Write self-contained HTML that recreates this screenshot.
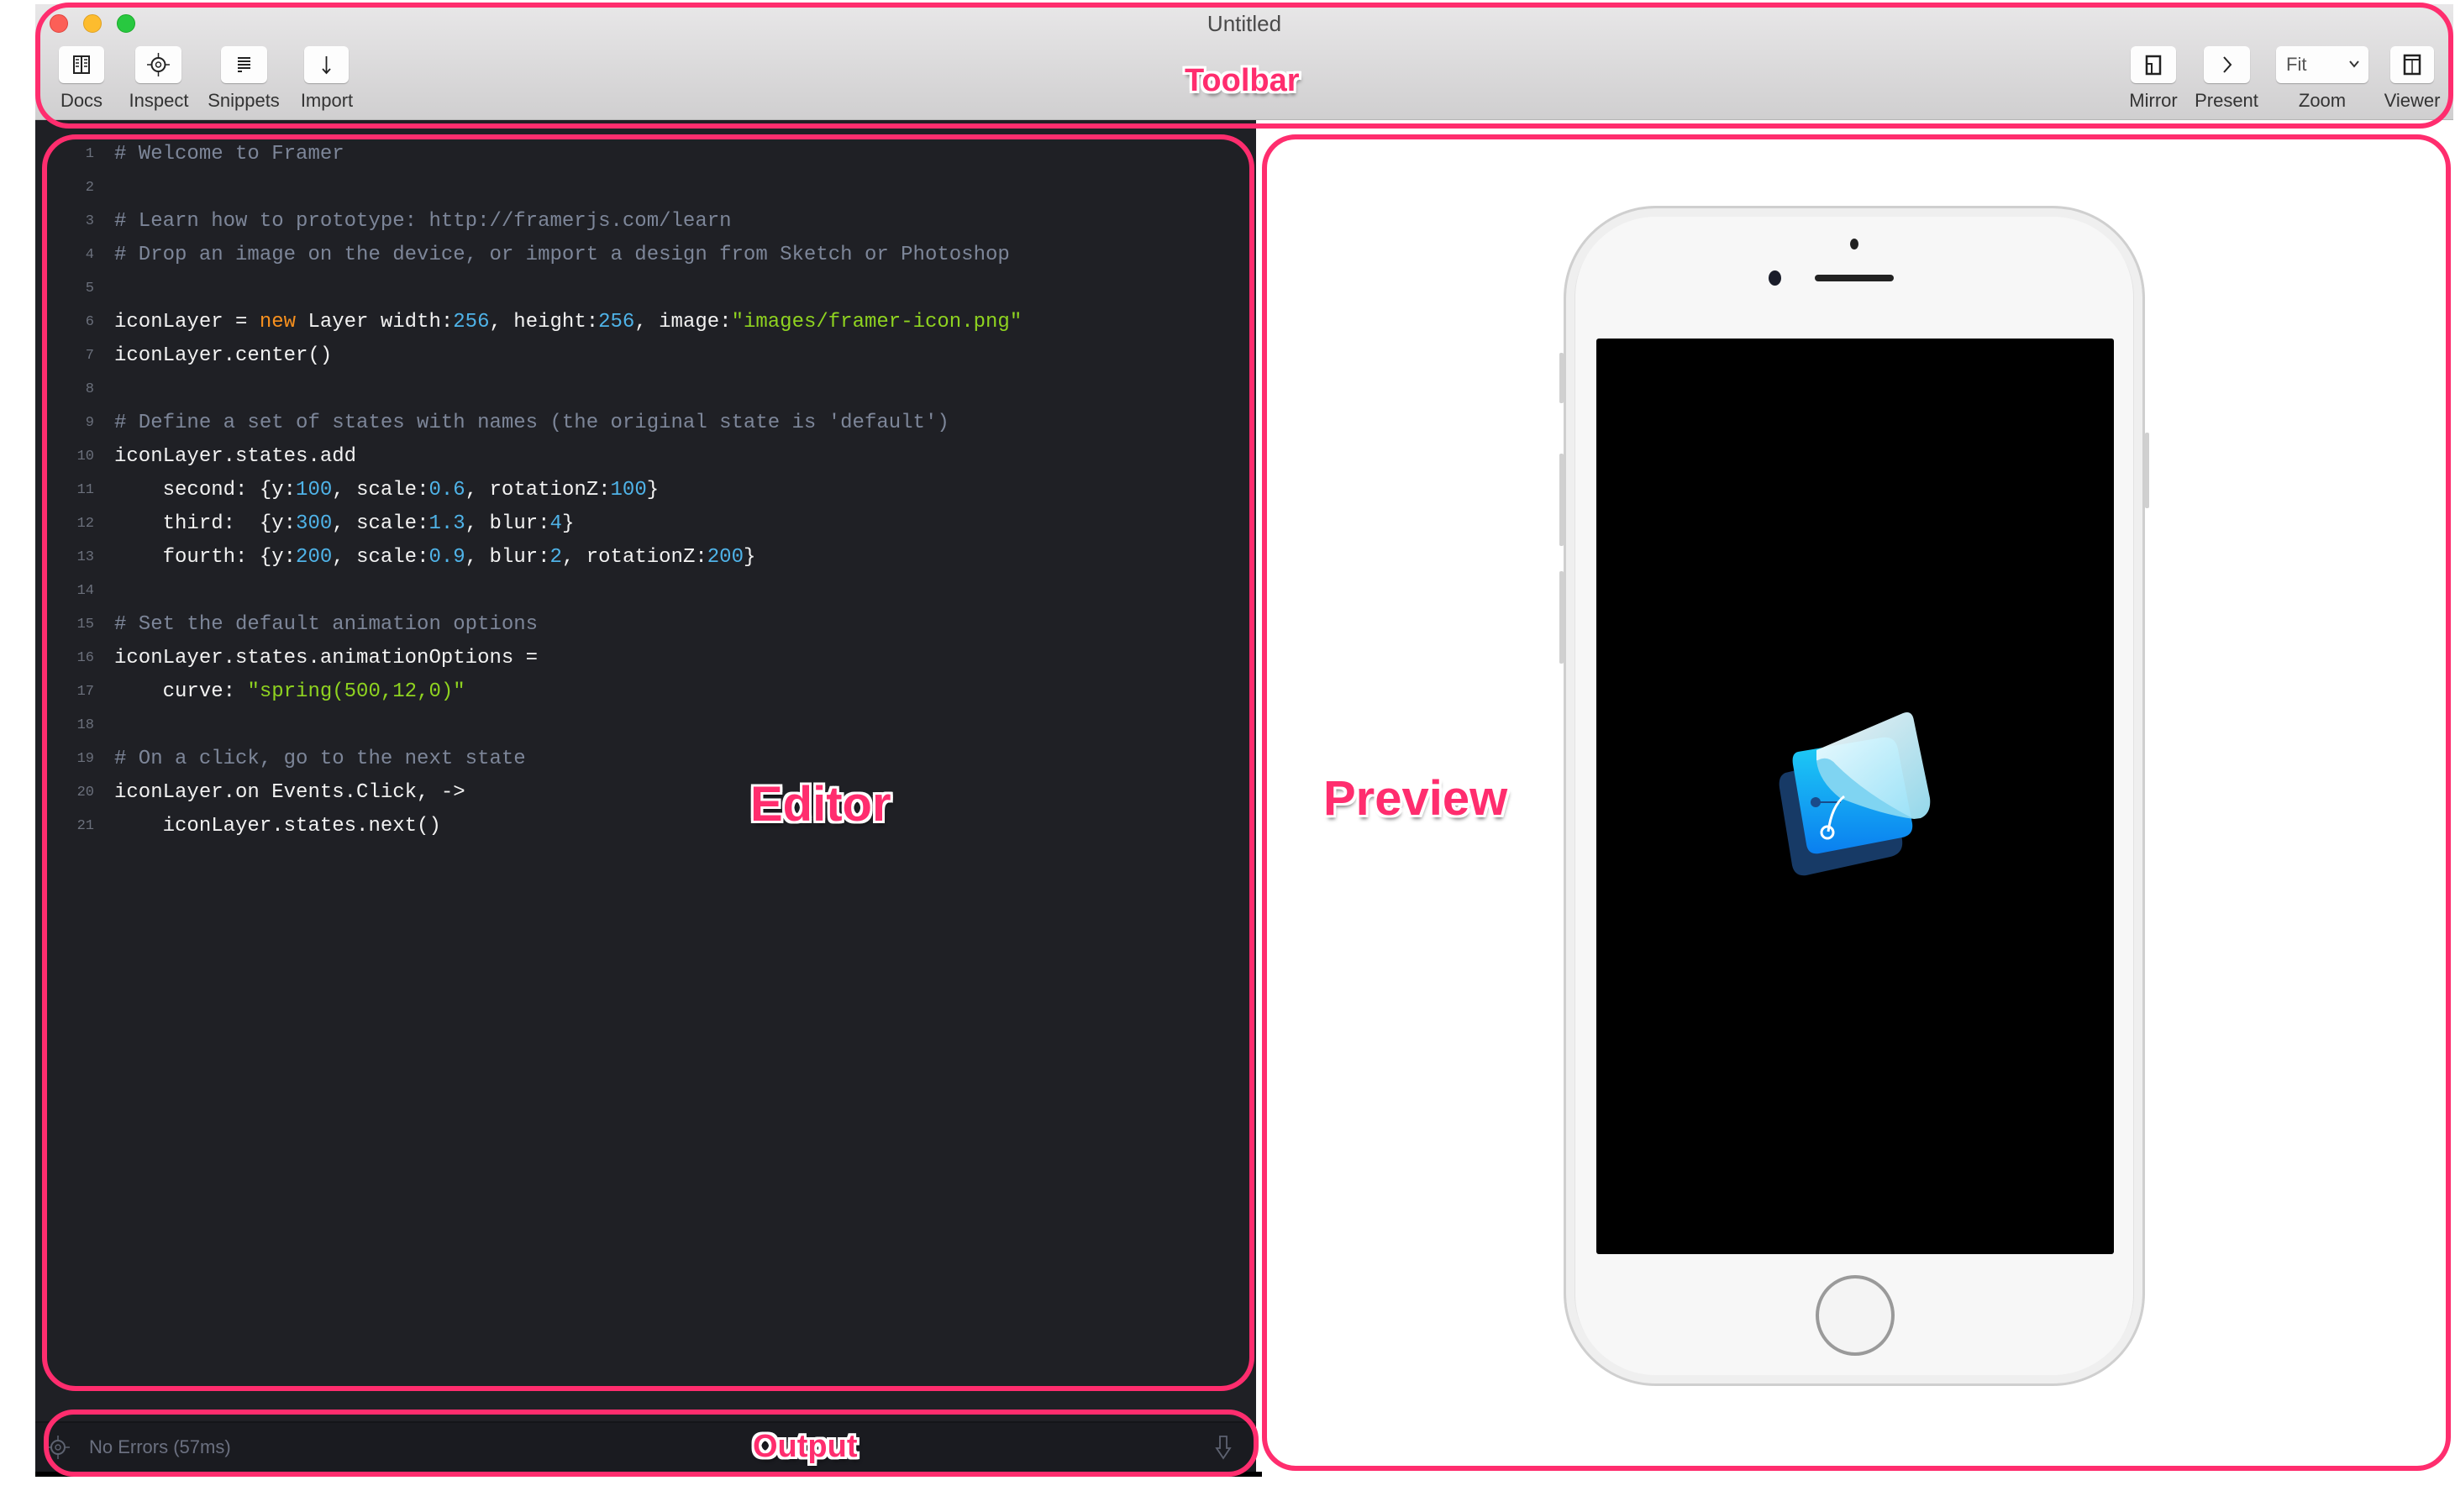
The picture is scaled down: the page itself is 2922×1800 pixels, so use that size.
<!DOCTYPE html>
<html><head><meta charset="utf-8"><style>
*{margin:0;padding:0;box-sizing:border-box}
body{width:2922px;height:1800px;background:#fff;position:relative;overflow:hidden;font-family:"Liberation Sans",sans-serif}
.abs{position:absolute}
#tb{left:42px;top:5px;width:2878px;height:138px;background:linear-gradient(#e8e7e8,#d0cfd0);border-bottom:1px solid #b5b5b5}
.tl{position:absolute;top:12px;width:22px;height:22px;border-radius:50%}
.btn{position:absolute;top:50px;height:44px;background:#fdfdfd;border-radius:6px;box-shadow:0 1px 1px rgba(0,0,0,.25)}
.lbl{position:absolute;top:102px;font-size:22px;color:#333;text-align:center;width:120px}
#ed{left:42px;top:143px;width:1453px;height:1549px;background:#1f2025}
#out{left:42px;top:1692px;width:1453px;height:60px;background:#1a1b20;border-top:2px solid #141519}
#bl{left:42px;top:1752px;width:1460px;height:6px;background:#000}
#pv{left:1495px;top:143px;width:1425px;height:1609px;background:#fff}
.code{position:absolute;left:136px;font-family:"Liberation Mono",monospace;font-size:24px;color:#f2f2f2;white-space:pre;line-height:40px;margin-top:2px}
.ln{position:absolute;left:60px;width:52px;text-align:right;font-family:"Liberation Mono",monospace;font-size:17px;color:#6b707c;line-height:40px;margin-top:2px}
.c{color:#7d8699}.n{color:#4fb3e8}.s{color:#8fd320}.k{color:#f7901e}
.box{position:absolute;border:6px solid #ff2d6e;border-radius:40px}
.ann{position:absolute;font-family:"Liberation Sans",sans-serif;font-weight:bold;color:#ff2d6e;text-shadow:-3px -3px 0 #fff,3px -3px 0 #fff,-3px 3px 0 #fff,3px 3px 0 #fff,0 3px 0 #fff,0 -3px 0 #fff,3px 0 0 #fff,-3px 0 0 #fff,2px 5px 4px rgba(0,0,0,.5)}
</style></head><body>
<div id="tb" class="abs">
 <div class="tl" style="left:17px;background:#fc5f57;border:1px solid #e0443e"></div>
 <div class="tl" style="left:57px;background:#fdbc2e;border:1px solid #dea123"></div>
 <div class="tl" style="left:97px;background:#28c840;border:1px solid #1aab29"></div>
 <div class="abs" style="left:0;width:2878px;top:8px;text-align:center;font-size:26px;color:#4a4a4a">Untitled</div>
 <div class="btn" style="left:28px;width:54px"><svg width="54" height="44"><rect x="18" y="12" width="18" height="20" fill="none" stroke="#222" stroke-width="2"/><line x1="27" y1="12" x2="27" y2="32" stroke="#222" stroke-width="2"/><path d="M20 16h4M20 20h4M20 24h4M30 16h4M30 20h4M30 24h4" stroke="#222" stroke-width="1.5"/></svg></div>
 <div class="btn" style="left:119px;width:55px"><svg width="55" height="44"><circle cx="27.5" cy="22" r="8" fill="none" stroke="#222" stroke-width="2"/><circle cx="27.5" cy="22" r="3" fill="none" stroke="#222" stroke-width="1.5"/><path d="M27.5 8v6M27.5 30v6M14 22h6M35 22h6" stroke="#222" stroke-width="1.5"/></svg></div>
 <div class="btn" style="left:221px;width:55px"><svg width="55" height="44"><path d="M20 14h15M20 18h15M20 22h15M20 26h15M20 30h5" stroke="#222" stroke-width="2"/></svg></div>
 <div class="btn" style="left:320px;width:53px"><svg width="53" height="44"><path d="M26.5 12v20M22 27l4.5 5 4.5-5" fill="none" stroke="#222" stroke-width="1.8"/></svg></div>
 <div class="lbl" style="left:-5px">Docs</div>
 <div class="lbl" style="left:87px">Inspect</div>
 <div class="lbl" style="left:188px">Snippets</div>
 <div class="lbl" style="left:287px">Import</div>
 <div class="btn" style="left:2494px;width:54px"><svg width="54" height="44"><rect x="19" y="12" width="16" height="21" fill="none" stroke="#222" stroke-width="2.5"/><rect x="19" y="21" width="6" height="12" fill="none" stroke="#222" stroke-width="2"/></svg></div>
 <div class="btn" style="left:2581px;width:55px"><svg width="55" height="44"><path d="M24 13l8 9-8 9" fill="none" stroke="#222" stroke-width="2"/></svg></div>
 <div class="btn" style="left:2667px;width:110px"><span class="abs" style="left:12px;top:9px;font-size:22px;color:#555">Fit</span><svg class="abs" style="left:86px;top:14px" width="14" height="14"><path d="M2 4l5 6 5-6" fill="none" stroke="#333" stroke-width="2"/></svg></div>
 <div class="btn" style="left:2803px;width:52px"><svg width="52" height="44"><rect x="17" y="11" width="18" height="22" fill="none" stroke="#222" stroke-width="2.5"/><line x1="17" y1="16" x2="35" y2="16" stroke="#222" stroke-width="2"/><line x1="26" y1="16" x2="26" y2="33" stroke="#222" stroke-width="1.5"/></svg></div>
 <div class="lbl" style="left:2461px">Mirror</div>
 <div class="lbl" style="left:2548px">Present</div>
 <div class="lbl" style="left:2662px">Zoom</div>
 <div class="lbl" style="left:2769px">Viewer</div>
</div>
<div id="ed" class="abs"></div>
<div id="pv" class="abs"></div>
<div id="out" class="abs">
 <svg class="abs" style="left:12px;top:14px" width="30" height="30"><circle cx="15" cy="15" r="8" fill="none" stroke="#5d6270" stroke-width="2"/><circle cx="15" cy="15" r="3" fill="none" stroke="#5d6270" stroke-width="1.5"/><path d="M15 1v6M15 23v6M1 15h6M23 15h6" stroke="#5d6270" stroke-width="1.5"/></svg>
 <span class="abs" style="left:64px;top:16px;font-size:22px;color:#6b7080">No Errors (57ms)</span>
 <svg class="abs" style="left:1403px;top:12px" width="24" height="36"><path d="M7 4h8v14h4l-8 12-8-12h4z" fill="none" stroke="#5d6270" stroke-width="1.8"/></svg>
</div>
<div id="bl" class="abs"></div>

<div class="ln" style="top:162px">1</div><div class="code" style="top:162px"><span class="c"># Welcome to Framer</span></div>
<div class="ln" style="top:202px">2</div>
<div class="ln" style="top:242px">3</div><div class="code" style="top:242px"><span class="c"># Learn how to prototype: http://framerjs.com/learn</span></div>
<div class="ln" style="top:282px">4</div><div class="code" style="top:282px"><span class="c"># Drop an image on the device, or import a design from Sketch or Photoshop</span></div>
<div class="ln" style="top:322px">5</div>
<div class="ln" style="top:362px">6</div><div class="code" style="top:362px">iconLayer = <span class="k">new</span> Layer width:<span class="n">256</span>, height:<span class="n">256</span>, image:<span class="s">"images/framer-icon.png"</span></div>
<div class="ln" style="top:402px">7</div><div class="code" style="top:402px">iconLayer.center()</div>
<div class="ln" style="top:442px">8</div>
<div class="ln" style="top:482px">9</div><div class="code" style="top:482px"><span class="c"># Define a set of states with names (the original state is 'default')</span></div>
<div class="ln" style="top:522px">10</div><div class="code" style="top:522px">iconLayer.states.add</div>
<div class="ln" style="top:562px">11</div><div class="code" style="top:562px">    second: {y:<span class="n">100</span>, scale:<span class="n">0.6</span>, rotationZ:<span class="n">100</span>}</div>
<div class="ln" style="top:602px">12</div><div class="code" style="top:602px">    third:  {y:<span class="n">300</span>, scale:<span class="n">1.3</span>, blur:<span class="n">4</span>}</div>
<div class="ln" style="top:642px">13</div><div class="code" style="top:642px">    fourth: {y:<span class="n">200</span>, scale:<span class="n">0.9</span>, blur:<span class="n">2</span>, rotationZ:<span class="n">200</span>}</div>
<div class="ln" style="top:682px">14</div>
<div class="ln" style="top:722px">15</div><div class="code" style="top:722px"><span class="c"># Set the default animation options</span></div>
<div class="ln" style="top:762px">16</div><div class="code" style="top:762px">iconLayer.states.animationOptions =</div>
<div class="ln" style="top:802px">17</div><div class="code" style="top:802px">    curve: <span class="s">"spring(500,12,0)"</span></div>
<div class="ln" style="top:842px">18</div>
<div class="ln" style="top:882px">19</div><div class="code" style="top:882px"><span class="c"># On a click, go to the next state</span></div>
<div class="ln" style="top:922px">20</div><div class="code" style="top:922px">iconLayer.on Events.Click, -&gt;</div>
<div class="ln" style="top:962px">21</div><div class="code" style="top:962px">    iconLayer.states.next()</div>

<div class="abs" style="left:1861px;top:245px;width:692px;height:1405px;border-radius:110px;background:linear-gradient(90deg,#d8d8d8,#f5f5f5 4%,#f6f6f6 96%,#d5d5d5);border:3px solid #cfcfcf;box-shadow:inset 0 0 0 10px #efefef"></div>
<div class="abs" style="left:1875px;top:258px;width:664px;height:1379px;border-radius:96px;background:#f7f7f7"></div>
<div class="abs" style="left:1856px;top:420px;width:5px;height:60px;background:#d0d0d0;border-radius:2px"></div>
<div class="abs" style="left:1856px;top:540px;width:5px;height:110px;background:#d0d0d0;border-radius:2px"></div>
<div class="abs" style="left:1856px;top:680px;width:5px;height:110px;background:#d0d0d0;border-radius:2px"></div>
<div class="abs" style="left:2553px;top:515px;width:5px;height:90px;background:#d0d0d0;border-radius:2px"></div>
<div class="abs" style="left:2202px;top:284px;width:10px;height:13px;border-radius:50%;background:#222"></div>
<div class="abs" style="left:2105px;top:322px;width:15px;height:18px;border-radius:50%;background:#1a1d2a"></div>
<div class="abs" style="left:2160px;top:327px;width:94px;height:8px;border-radius:4px;background:#222"></div>
<div class="abs" style="left:1900px;top:403px;width:616px;height:1090px;background:#000;border-radius:3px"></div>
<div class="abs" style="left:2161px;top:1518px;width:94px;height:96px;border-radius:50%;border:4px solid #9a9a9a;background:#f4f4f4"></div>

<svg class="abs" style="left:2080px;top:820px" width="260" height="250" viewBox="0 0 260 250">
 <defs>
  <linearGradient id="g1" x1="0" y1="0" x2="0" y2="1"><stop offset="0" stop-color="#1fd0f5"/><stop offset="1" stop-color="#0a7ff0"/></linearGradient>
  <linearGradient id="g2" x1="0" y1="0" x2="1" y2="1"><stop offset="0" stop-color="#fbfeff"/><stop offset="1" stop-color="#9be3f7"/></linearGradient>
 </defs>
 <path d="M45 100 L150 75 Q168 72 172 90 L184 180 Q186 196 170 200 L70 222 Q56 224 53 210 L38 118 Q36 104 45 100Z" fill="#173a66"/>
 <path d="M60 75 L160 58 Q176 56 179 72 L196 160 Q198 174 184 177 L85 196 Q72 198 70 185 L54 90 Q52 77 60 75Z" fill="url(#g1)"/>
 <path d="M82 73 L185 29 Q196 25 198 38 L217 130 Q219 148 206 154 L198 155 Q150 135 110 110 Q95 100 82 85Z" fill="url(#g2)" opacity=".95"/>
 <path d="M82 86 Q95 78 105 90 Q140 125 198 155 Q160 150 110 130 Q85 110 82 86Z" fill="#7fd4f2"/>
 <circle cx="81" cy="135" r="6" fill="#1a4b8a"/><path d="M81 135h30" stroke="#1a4b8a" stroke-width="2"/>
 <path d="M115 128 Q100 140 96 170" fill="none" stroke="#fff" stroke-width="3"/>
 <circle cx="95" cy="171" r="7" fill="none" stroke="#fff" stroke-width="3"/>
</svg>

<div class="box" style="left:42px;top:3px;width:2878px;height:150px"></div>
<div class="box" style="left:50px;top:160px;width:1443px;height:1496px"></div>
<div class="box" style="left:1502px;top:160px;width:1415px;height:1591px"></div>
<div class="box" style="left:52px;top:1678px;width:1446px;height:80px;border-radius:36px"></div>
<div class="ann" style="left:1410px;top:75px;font-size:38px">Toolbar</div>
<div class="ann" style="left:893px;top:924px;font-size:58px">Editor</div>
<div class="ann" style="left:1575px;top:917px;font-size:58px">Preview</div>
<div class="ann" style="left:896px;top:1701px;font-size:38px">Output</div>
</body></html>
